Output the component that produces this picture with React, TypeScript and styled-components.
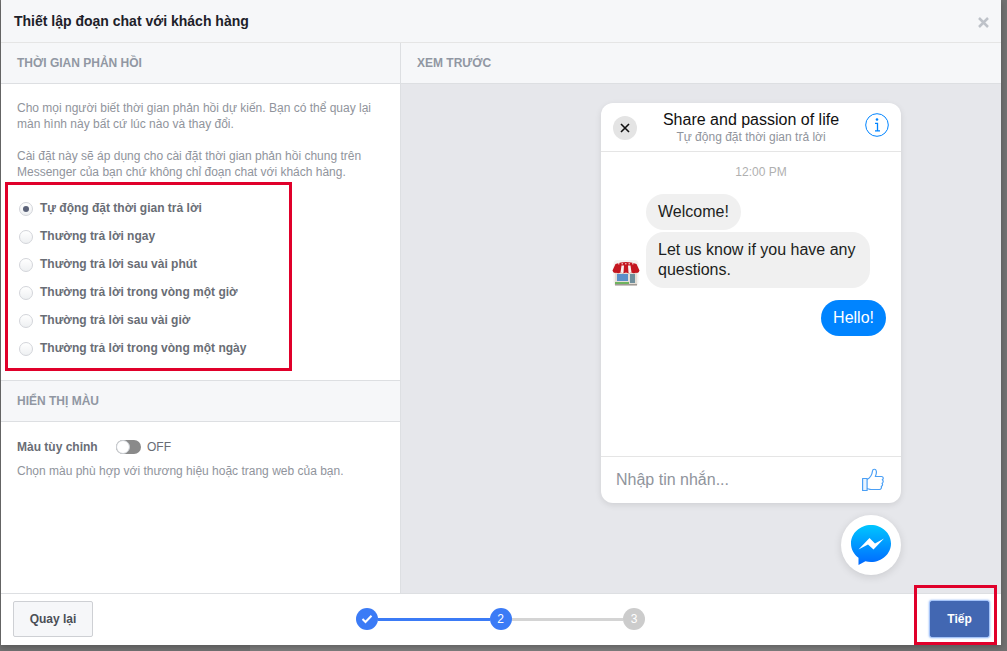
import React from 'react';
import styled, { createGlobalStyle } from 'styled-components';

const GlobalStyle = createGlobalStyle`
  * {
    box-sizing: border-box;
  }
  html, body {
    margin: 0;
    height: 100%;
    overflow: hidden;
  }
  body {
    font-family: 'Liberation Sans', Arial, sans-serif;
    background-color: #717171;
  }
`;
const Page = styled.div`
  position: relative;
  width: 1007px;
  height: 651px;
  padding-left: 1px;
  background: linear-gradient(
    to right,
    #717171 250px,
    #7d7d7d 250px,
    #7d7d7d 860px,
    #717171 860px
  );
`;
const Modal = styled.div`
  display: flex;
  flex-direction: column;
  width: 1000px;
  height: 645px;
  background-color: #fff;
  box-shadow: 0 2px 6px rgba(0, 0, 0, 0.25);
`;
const ModalHeader = styled.div`
  display: flex;
  align-items: center;
  justify-content: space-between;
  flex: 0 0 43px;
  padding: 0 12px 0 13px;
  background-color: #f6f7f9;
  border-bottom: 1px solid #e5e5e5;
`;
const ModalTitle = styled.div`
  font-size: 14px;
  font-weight: bold;
  color: #1d2129;
`;
const CloseMark = styled.svg`
  width: 11px;
  height: 11px;
  margin-top: 2px;
`;
const Columns = styled.div`
  display: flex;
  flex: 1;
  min-height: 0;
`;
const LeftColumn = styled.div`
  flex: 0 0 400px;
  border-right: 1px solid #dddfe2;
`;
const SectionHeader = styled.div`
  display: flex;
  align-items: center;
  height: 41px;
  padding: 0 0 1px 16px;
  font-size: 12px;
  font-weight: bold;
  color: #9197a3;
  background-color: #f6f7f9;
  border-bottom: 1px solid #dddfe2;
`;
const ColorHeader = styled(SectionHeader)`
  height: 42px;
  border-top: 1px solid #dddfe2;
`;
const SectionBody = styled.div`
  padding: 16px 16px 0;
`;
const ResponseBody = styled(SectionBody)`
  height: 296px;
`;
const Hint = styled.p`
  margin: 0 0 16px;
  font-size: 12px;
  line-height: 16px;
  color: #90949c;
`;
const RadioList = styled.div`
  display: flex;
  flex-direction: column;
  gap: 8px;
  padding: 2px 0 0 2px;
`;
const RadioRow = styled.div`
  display: flex;
  align-items: center;
  gap: 7px;
  height: 20px;
  font-size: 12px;
  font-weight: bold;
  color: #696d75;
`;
const RadioDot = styled.span<{ $checked: boolean }>`
  display: flex;
  align-items: center;
  justify-content: center;
  width: 14px;
  height: 14px;
  margin-top: 1px;
  border-radius: 50%;
  border: 1px solid #d3d5da;
  background: linear-gradient(#ffffff, #eef0f2);

  &::after {
    content: '';
    display: ${(p) => (p.$checked ? 'block' : 'none')};
    width: 6px;
    height: 6px;
    border-radius: 50%;
    background-color: #5b6278;
  }
`;
const ToggleRow = styled.div`
  display: flex;
  align-items: center;
  height: 16px;
  margin-top: 1px;
`;
const ToggleLabel = styled.span`
  width: 99px;
  font-size: 12px;
  font-weight: bold;
  color: #696d75;
`;
const Toggle = styled.span`
  display: flex;
  width: 25px;
  height: 14px;
  border-radius: 7px;
  background-color: #8a8a8a;
`;
const ToggleKnob = styled.span`
  width: 14px;
  height: 14px;
  border-radius: 50%;
  background-color: #fff;
  border: 1px solid #ccd0d5;
`;
const ToggleState = styled.span`
  margin-left: 6px;
  font-size: 12px;
  color: #696d75;
`;
const ColorHint = styled(Hint)`
  margin: 8px 0 0;
`;
const RightColumn = styled.div`
  display: flex;
  flex-direction: column;
  flex: 1;
  background-color: #e6e7eb;
`;
const PreviewArea = styled.div`
  display: flex;
  flex-direction: column;
  align-items: flex-end;
  flex: 1;
  padding: 19px 100px 0 0;
`;
const ChatCard = styled.div`
  display: flex;
  flex-direction: column;
  width: 300px;
  height: 400px;
  background-color: #fff;
  border-radius: 12px;
  box-shadow: 0 2px 6px rgba(0, 0, 0, 0.1);
`;
const ChatHeader = styled.div`
  display: flex;
  align-items: center;
  justify-content: space-between;
  flex: 0 0 49px;
  padding: 1px 12px 0;
  border-bottom: 1px solid #e5e5e5;
`;
const CircleClose = styled.span`
  display: flex;
  align-items: center;
  justify-content: center;
  flex: 0 0 24px;
  width: 24px;
  height: 24px;
  border-radius: 50%;
  background-color: #e4e4e4;
`;
const ChatTitleBlock = styled.div`
  flex: 1;
  text-align: center;
`;
const ChatTitle = styled.div`
  font-size: 16px;
  line-height: 19px;
  color: #111;
`;
const ChatSubtitle = styled.div`
  margin-top: 1px;
  font-size: 12px;
  line-height: 15px;
  color: #90949c;
`;
const InfoIcon = styled.svg`
  margin-bottom: 5px;
`;
const Messages = styled.div`
  display: flex;
  flex-direction: column;
  flex: 1;
  padding: 12px 15px 0 11px;
`;
const TimeStamp = styled.div`
  margin-bottom: 14px;
  padding-left: 24px;
  font-size: 12px;
  line-height: 16px;
  text-align: center;
  color: #b0b0b0;
`;
const BubbleGroup = styled.div`
  display: flex;
  align-items: flex-end;
  gap: 6px;
`;
const Avatar = styled.svg`
  flex: 0 0 28px;
  width: 28px;
  height: 28px;
  margin-bottom: 1px;
`;
const BubbleStack = styled.div`
  display: flex;
  flex-direction: column;
  align-items: flex-start;
  gap: 2px;
`;
const Bubble = styled.div<{ $mine?: boolean }>`
  padding: 8px 12px;
  font-size: 16px;
  line-height: 20px;
  border-radius: 18px;
  color: ${(p) => (p.$mine ? '#fff' : '#1c1e21')};
  background-color: ${(p) => (p.$mine ? '#0084ff' : '#f0f0f0')};
`;
const LongBubble = styled(Bubble)`
  width: 224px;
`;
const MineBubble = styled(Bubble)`
  align-self: flex-end;
  margin-top: 12px;
`;
const InputBar = styled.div`
  display: flex;
  align-items: center;
  justify-content: space-between;
  flex: 0 0 47px;
  padding: 0 17px 0 15px;
  border-top: 1px solid #e5e5e5;
`;
const InputPlaceholder = styled.span`
  font-size: 16px;
  color: #90949c;
`;
const Launcher = styled.div`
  display: flex;
  align-items: center;
  justify-content: center;
  width: 60px;
  height: 60px;
  margin-top: 12px;
  border-radius: 50%;
  background-color: #fff;
  box-shadow: 0 2px 8px rgba(0, 0, 0, 0.12);
`;
const Footer = styled.div`
  display: grid;
  grid-template-columns: 343px 289px 1fr;
  align-items: center;
  flex: 0 0 52px;
  padding: 0 12px 1px 12px;
  background-color: #fff;
  border-top: 1px solid #dddfe2;
`;
const BackButton = styled.button`
  justify-self: start;
  width: 80px;
  height: 36px;
  padding: 0;
  font-family: inherit;
  font-size: 12px;
  font-weight: bold;
  color: #4b4f56;
  background-color: #f6f7f9;
  border: 1px solid #ced0d4;
  border-radius: 2px;
`;
const NextButton = styled.button`
  justify-self: end;
  width: 59px;
  height: 36px;
  padding: 0;
  font-family: inherit;
  font-size: 12px;
  font-weight: bold;
  color: #fff;
  background-color: #4267b2;
  border: 1px solid #4267b2;
  border-radius: 2px;
  box-shadow: 0 0 2px 1px rgba(110, 160, 245, 0.85);
`;
const Stepper = styled.div`
  display: flex;
  align-items: center;
`;
const StepDot = styled.span<{ $on: boolean }>`
  display: flex;
  align-items: center;
  justify-content: center;
  flex: 0 0 22px;
  width: 22px;
  height: 22px;
  border-radius: 50%;
  font-size: 12px;
  color: #fff;
  background-color: ${(p) => (p.$on ? '#3b7bf6' : '#cccccc')};
`;
const StepLine = styled.span<{ $on: boolean }>`
  flex: 1;
  height: 3px;
  background-color: ${(p) => (p.$on ? '#3b7bf6' : '#d4d4d4')};
`;
const Highlight = styled.div`
  position: absolute;
  border: 3px solid #e0002a;
  pointer-events: none;
`;
const RadioHighlight = styled(Highlight)`
  left: 5px;
  top: 182px;
  width: 287px;
  height: 189px;
`;
const NextHighlight = styled(Highlight)`
  left: 914px;
  top: 585px;
  width: 83px;
  height: 60px;
`;

const options = [
  'Tự động đặt thời gian trả lời',
  'Thường trả lời ngay',
  'Thường trả lời sau vài phút',
  'Thường trả lời trong vòng một giờ',
  'Thường trả lời sau vài giờ',
  'Thường trả lời trong vòng một ngày',
];

const StoreIcon = () => (
  <Avatar viewBox="0 0 28 28">
    <rect x="1.500" y="1" width="25" height="26" rx="4" fill="#f4f2f0" />
    <rect x="3" y="13" width="22" height="12" fill="#e4ded6" />
    <rect x="5" y="15" width="11" height="7" fill="#5b8fc9" />
    <rect x="18" y="15" width="5" height="9" fill="#6f8f9c" />
    <rect x="3" y="23" width="14" height="2" fill="#6fb35f" />
    <rect x="3" y="25" width="22" height="1.500" fill="#a09a94" />
    <path d="M3.500 5 Q14 1 24.500 5 L27.500 11.500 Q27 14.500 24 13.800 Q21.500 14.800 19.500 13.500 Q17 14.800 14 13.500 Q11 14.800 8.500 13.500 Q6.500 14.800 4 13.800 Q1 14.500 0.500 11.500 Z" fill="#c4161f" />
    <path d="M9.500 6.500 H12 L11.500 13.800 Q9.800 14.300 8.500 13.500 Z M16 6.500 H18.500 L19.500 13.500 Q18.200 14.300 16.500 13.800 Z" fill="#f8f3f0" />
    <path d="M6 4.800 H22" stroke="#fbe9e6" strokeWidth="1" strokeDasharray="1.500 2" />
  </Avatar>
);

const ThumbIcon = () => (
  <svg width="22" height="24" viewBox="0 0 22 24" fill="none" stroke="#4a9ff5" strokeWidth="1.2" strokeLinejoin="round">
    <rect x="0.600" y="10.500" width="4.500" height="12" fill="#eaf4fe" />
    <path d="M5 11.500 C8 10 10 7 10.500 3 C10.700 0.800 13.800 0.500 14.300 3 C14.700 5 14 7 13.300 8.500 H19.500 C21.500 8.500 21.800 11 20.300 11.800 C21.700 12.800 21.300 14.800 20 15.200 C21 16.300 20.500 18 19.300 18.400 C19.800 19.800 19 21.500 17.500 21.500 H9 C7.500 21.500 6.500 20.800 5 20.500" />
  </svg>
);

const MessengerIcon = () => (
  <svg width="40" height="41" viewBox="0 0 40 41">
    <defs>
      <linearGradient id="messengerFill" x1="0" y1="0" x2="0" y2="1">
        <stop offset="0" stopColor="#00c6ff" />
        <stop offset="1" stopColor="#0068ff" />
      </linearGradient>
    </defs>
    <path
      d="M20 0 C31 0 40 8.200 40 18.500 C40 28.800 31 37 20 37 C18 37 16.200 36.700 14.400 36.200 L7.500 40 V32.800 C2.900 29.400 0 24.300 0 18.500 C0 8.200 9 0 20 0 Z"
      fill="url(#messengerFill)"
    />
    <path d="M7.500 24.500 L18.500 13 L24 18.500 L33 13.500 L22.500 24.500 L17 19.500 Z" fill="#fff" />
  </svg>
);

const App = () => (
  <Page>
    <GlobalStyle />
    <Modal>
      <ModalHeader>
        <ModalTitle>Thiết lập đoạn chat với khách hàng</ModalTitle>
        <CloseMark viewBox="0 0 11 11">
          <path d="M1 1 L10 10 M10 1 L1 10" stroke="#bec2c9" strokeWidth="2.500" />
        </CloseMark>
      </ModalHeader>
      <Columns>
        <LeftColumn>
          <SectionHeader>THỜI GIAN PHẢN HỒI</SectionHeader>
          <ResponseBody>
            <Hint>
              Cho mọi người biết thời gian phản hồi dự kiến. Bạn có thể quay lại
              <br />
              màn hình này bất cứ lúc nào và thay đổi.
            </Hint>
            <Hint>
              Cài đặt này sẽ áp dụng cho cài đặt thời gian phản hồi chung trên
              <br />
              Messenger của bạn chứ không chỉ đoạn chat với khách hàng.
            </Hint>
            <RadioList>
              {options.map((option, i) => (
                <RadioRow key={option}>
                  <RadioDot $checked={i === 0} />
                  {option}
                </RadioRow>
              ))}
            </RadioList>
          </ResponseBody>
          <ColorHeader>HIỂN THỊ MÀU</ColorHeader>
          <SectionBody>
            <ToggleRow>
              <ToggleLabel>Màu tùy chỉnh</ToggleLabel>
              <Toggle>
                <ToggleKnob />
              </Toggle>
              <ToggleState>OFF</ToggleState>
            </ToggleRow>
            <ColorHint>Chọn màu phù hợp với thương hiệu hoặc trang web của bạn.</ColorHint>
          </SectionBody>
        </LeftColumn>
        <RightColumn>
          <SectionHeader>XEM TRƯỚC</SectionHeader>
          <PreviewArea>
            <ChatCard>
              <ChatHeader>
                <CircleClose>
                  <svg width="10" height="10" viewBox="0 0 10 10">
                    <path d="M1 1 L9 9 M9 1 L1 9" stroke="#111" strokeWidth="1.600" />
                  </svg>
                </CircleClose>
                <ChatTitleBlock>
                  <ChatTitle>Share and passion of life</ChatTitle>
                  <ChatSubtitle>Tự động đặt thời gian trả lời</ChatSubtitle>
                </ChatTitleBlock>
                <InfoIcon width="24" height="24" viewBox="0 0 24 24" fill="none">
                  <circle cx="12" cy="12" r="11.300" stroke="#0084ff" strokeWidth="1" />
                  <circle cx="12" cy="6.500" r="1.300" fill="#0084ff" />
                  <path d="M10 10.300 H12.500 V17.800 M10 17.800 H15" stroke="#0084ff" strokeWidth="1.300" />
                </InfoIcon>
              </ChatHeader>
              <Messages>
                <TimeStamp>12:00 PM</TimeStamp>
                <BubbleGroup>
                  <StoreIcon />
                  <BubbleStack>
                    <Bubble>Welcome!</Bubble>
                    <LongBubble>Let us know if you have any questions.</LongBubble>
                  </BubbleStack>
                </BubbleGroup>
                <MineBubble $mine>Hello!</MineBubble>
              </Messages>
              <InputBar>
                <InputPlaceholder>Nhập tin nhắn...</InputPlaceholder>
                <ThumbIcon />
              </InputBar>
            </ChatCard>
            <Launcher>
              <MessengerIcon />
            </Launcher>
          </PreviewArea>
        </RightColumn>
      </Columns>
      <Footer>
        <BackButton>Quay lại</BackButton>
        <Stepper>
          <StepDot $on>
            <svg width="12" height="10" viewBox="0 0 12 10" fill="none">
              <path d="M1.500 5 L4.500 8 L10.500 1.800" stroke="#fff" strokeWidth="2" />
            </svg>
          </StepDot>
          <StepLine $on />
          <StepDot $on>2</StepDot>
          <StepLine $on={false} />
          <StepDot $on={false}>3</StepDot>
        </Stepper>
        <NextButton>Tiếp</NextButton>
      </Footer>
    </Modal>
    <RadioHighlight />
    <NextHighlight />
  </Page>
);

export default App;
